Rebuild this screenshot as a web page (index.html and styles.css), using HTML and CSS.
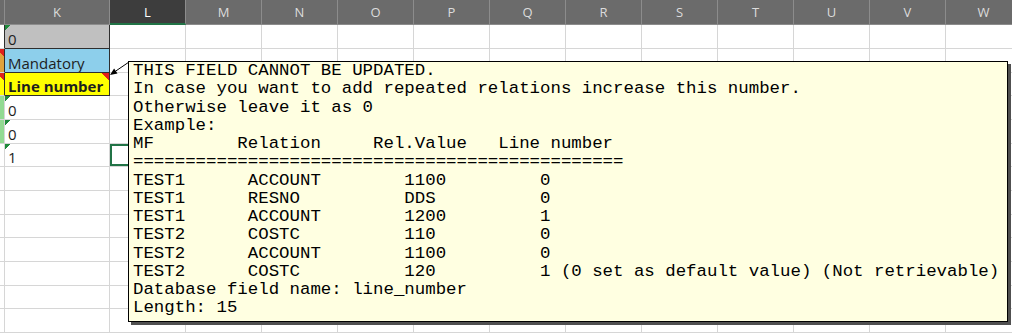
FILE: index.html
```html
<!DOCTYPE html>
<html lang="en">
<head>
    <meta charset="UTF-8">
    <meta name="viewport" content="width=device-width, initial-scale=1.0">
    <title>Sheet - Line number comment</title>
    <link rel="stylesheet" href="styles.css">
</head>
<body>
    <div class="workbook">
        <table class="sheet">
            <colgroup>
                <col class="col-stub">
                <col class="col-k">
                <col span="12" class="col-std">
            </colgroup>
            <thead>
                <tr>
                    <th class="stub"></th>
                    <th>K</th>
                    <th class="selected">L</th>
                    <th>M</th><th>N</th><th>O</th><th>P</th><th>Q</th><th>R</th>
                    <th>S</th><th>T</th><th>U</th><th>V</th><th>W</th>
                </tr>
            </thead>
            <tbody>
                <tr>
                    <td class="stub boxed"></td>
                    <td class="cell-k fill-gray mark-green">0</td>
                    <td></td><td></td><td></td><td></td><td></td><td></td><td></td><td></td><td></td><td></td><td></td><td></td>
                </tr>
                <tr>
                    <td class="stub boxed fill-orange flag-red"></td>
                    <td class="cell-k fill-blue">Mandatory</td>
                    <td></td><td></td><td></td><td></td><td></td><td></td><td></td><td></td><td></td><td></td><td></td><td></td>
                </tr>
                <tr>
                    <td class="stub boxed fill-yellow flag-red"></td>
                    <td class="cell-k fill-yellow flag-red strong">Line number</td>
                    <td></td><td></td><td></td><td></td><td></td><td></td><td></td><td></td><td></td><td></td><td></td><td></td>
                </tr>
                <tr>
                    <td class="stub fill-green"></td>
                    <td class="mark-green">0</td>
                    <td></td><td></td><td></td><td></td><td></td><td></td><td></td><td></td><td></td><td></td><td></td><td></td>
                </tr>
                <tr>
                    <td class="stub fill-green"></td>
                    <td class="mark-green">0</td>
                    <td></td><td></td><td></td><td></td><td></td><td></td><td></td><td></td><td></td><td></td><td></td><td></td>
                </tr>
                <tr>
                    <td class="stub"></td>
                    <td class="mark-green">1</td>
                    <td class="active"></td><td></td><td></td><td></td><td></td><td></td><td></td><td></td><td></td><td></td><td></td><td></td>
                </tr>
                <tr><td class="stub"></td><td></td><td></td><td></td><td></td><td></td><td></td><td></td><td></td><td></td><td></td><td></td><td></td><td></td></tr>
                <tr><td class="stub"></td><td></td><td></td><td></td><td></td><td></td><td></td><td></td><td></td><td></td><td></td><td></td><td></td><td></td></tr>
                <tr><td class="stub"></td><td></td><td></td><td></td><td></td><td></td><td></td><td></td><td></td><td></td><td></td><td></td><td></td><td></td></tr>
                <tr><td class="stub"></td><td></td><td></td><td></td><td></td><td></td><td></td><td></td><td></td><td></td><td></td><td></td><td></td><td></td></tr>
                <tr><td class="stub"></td><td></td><td></td><td></td><td></td><td></td><td></td><td></td><td></td><td></td><td></td><td></td><td></td><td></td></tr>
                <tr><td class="stub"></td><td></td><td></td><td></td><td></td><td></td><td></td><td></td><td></td><td></td><td></td><td></td><td></td><td></td></tr>
                <tr><td class="stub"></td><td></td><td></td><td></td><td></td><td></td><td></td><td></td><td></td><td></td><td></td><td></td><td></td><td></td></tr>
            </tbody>
        </table>

        <!-- comment callout pointing at K3 -->
        <svg class="callout-arrow" width="32" height="26" viewBox="0 0 32 26">
            <line x1="29" y1="7" x2="15.8" y2="16" stroke="#000" stroke-width="1"/>
            <polygon points="10,20 17.5,18.5 14.1,13.6" fill="#000"/>
        </svg>

        <div class="note">
<pre>THIS FIELD CANNOT BE UPDATED.
In case you want to add repeated relations increase this number.
Otherwise leave it as 0
Example:
MF        Relation     Rel.Value   Line number
===============================================
TEST1      ACCOUNT        1100         0
TEST1      RESNO          DDS          0
TEST1      ACCOUNT        1200         1
TEST2      COSTC          110          0
TEST2      ACCOUNT        1100         0
TEST2      COSTC          120          1 (0 set as default value) (Not retrievable)
Database field name: line_number
Length: 15</pre>
        </div>
    </div>
</body>
</html>
```

FILE: styles.css
```css
body {
    margin: 0;
    background-color: #fff;
    overflow: hidden;
}
.workbook {
    position: relative;
    width: 1012px;
    height: 333px;
    overflow: hidden;
}

/* grid */
.sheet {
    border-collapse: separate;
    border-spacing: 0;
    table-layout: fixed;
    width: 1022px;
    font-family: "Open Sans", "Noto Sans", sans-serif;
}
.col-stub { width: 5px; }
.col-k { width: 105px; }
.col-std { width: 76px; }

.sheet th {
    height: 25px;
    padding: 0;
    background-color: #6b6b6b;
    color: #dcdcdc;
    font-size: 13px;
    font-weight: 400;
    border-right: 1px solid #8c8c8c;
    border-bottom: 1px solid #8c8c8c;
    box-sizing: border-box;
}
.sheet th.selected {
    background-color: #3d3d3d;
    color: #fff;
    border-bottom: 2px solid #217346;
}

.sheet tbody tr { height: 24px; }
.sheet tbody tr:nth-child(3n) { height: 23px; }

.sheet td {
    padding: 0 3px 1px;
    border-right: 1px solid #d6d6d6;
    border-bottom: 1px solid #d6d6d6;
    font-size: 15px;
    line-height: 1;
    color: #1e1e1e;
    vertical-align: bottom;
    white-space: nowrap;
    overflow: hidden;
    box-sizing: border-box;
}
.sheet td.stub { padding: 0; }
.sheet td.boxed,
.sheet td.cell-k {
    border-right-color: #2e2e2e;
}
.sheet td.cell-k { border-bottom-color: #2e2e2e; }

.fill-gray { background-color: #c0c0c0; }
.fill-blue { background-color: #8dcfeb; }
.fill-yellow { background-color: #ffff00; }
.fill-orange { background-color: #e0a23c; }
.fill-green { background-color: #92da92; }
.strong { font-weight: 700; }

/* cell indicators */
.mark-green {
    background-image: linear-gradient(135deg, #1f8a3c 4px, transparent 4px);
}
.flag-red {
    background-image: linear-gradient(225deg, #e0201c 5px, transparent 5px);
}
.sheet td.active {
    box-shadow: inset 0 0 0 2px #217346;
}

/* comment */
.callout-arrow {
    position: absolute;
    left: 100px;
    top: 55px;
}
.note {
    position: absolute;
    left: 128px;
    top: 61px;
    width: 880px;
    box-sizing: border-box;
    padding: 0 4px 3px;
    background-color: #ffffe1;
    border: 1px solid #000;
    box-shadow: 3px 3px 0 #505050;
}
.note pre {
    margin: 0;
    font-family: "Liberation Mono", "Courier New", monospace;
    font-size: 17.4px;
    line-height: 18.25px;
    color: #000;
}
```
